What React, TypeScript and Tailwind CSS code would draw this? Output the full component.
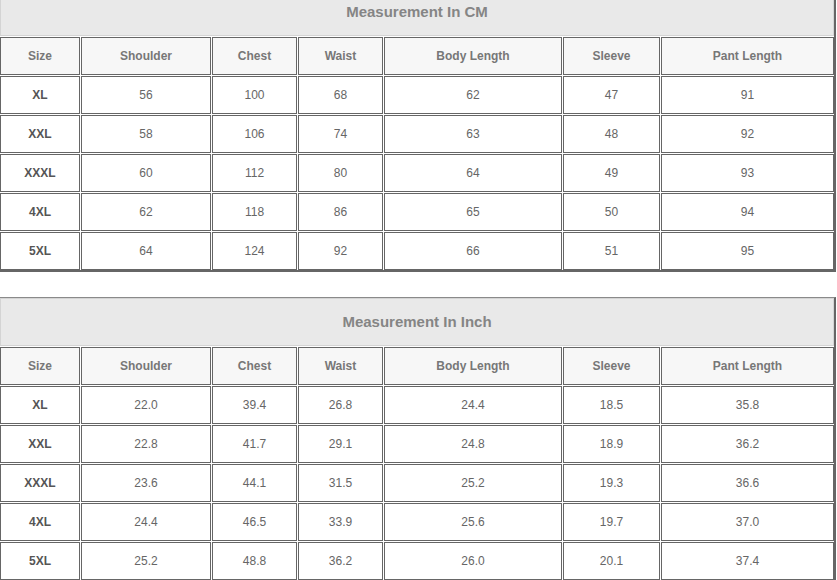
const COLUMNS = ['Size', 'Shoulder', 'Chest', 'Waist', 'Body Length', 'Sleeve', 'Pant Length'];

const CM_ROWS = [
  ['XL', '56', '100', '68', '62', '47', '91'],
  ['XXL', '58', '106', '74', '63', '48', '92'],
  ['XXXL', '60', '112', '80', '64', '49', '93'],
  ['4XL', '62', '118', '86', '65', '50', '94'],
  ['5XL', '64', '124', '92', '66', '51', '95'],
];

const INCH_ROWS = [
  ['XL', '22.0', '39.4', '26.8', '24.4', '18.5', '35.8'],
  ['XXL', '22.8', '41.7', '29.1', '24.8', '18.9', '36.2'],
  ['XXXL', '23.6', '44.1', '31.5', '25.2', '19.3', '36.6'],
  ['4XL', '24.4', '46.5', '33.9', '25.6', '19.7', '37.0'],
  ['5XL', '25.2', '48.8', '36.2', '26.0', '20.1', '37.4'],
];

function SizeTable({ title, rows }: { title: string; rows: string[][] }) {
  return (
    <div className="w-[838px] border-t border-l border-t-[#8a8a8a] border-l-[#bdbdbd] border-r-2 border-b-2 border-r-[#666] border-b-[#666] pl-px">
      <div className="grid grid-cols-[80px_130px_85px_85px_178px_97px_173px] gap-px">
        <div className="col-span-7 h-[48px] flex items-center justify-center bg-[#e9e9e9] border border-[#d4d4d4] text-[15px] font-bold text-[#858585]">
          {title}
        </div>
        {COLUMNS.map((c) => (
          <div
            key={c}
            className="h-[38px] flex items-center justify-center bg-[#f7f7f7] border border-[#666] text-[12px] font-bold text-[#777]"
          >
            {c}
          </div>
        ))}
        {rows.map((row) =>
          row.map((v, i) => (
            <div
              key={row[0] + '-' + i}
              className={
                i === 0
                  ? 'h-[38px] flex items-center justify-center bg-white border border-[#666] text-[12px] font-bold text-[#555]'
                  : 'h-[38px] flex items-center justify-center bg-white border border-[#666] text-[12px] text-[#666]'
              }
            >
              {v}
            </div>
          ))
        )}
      </div>
    </div>
  );
}

export default function App() {
  return (
    <div className="w-[837px] h-[580px] overflow-hidden bg-white font-['Liberation_Sans',Arial,sans-serif]">
      <div className="-mt-[13px] -ml-[2px] flex flex-col gap-[25px]">
        <SizeTable title="Measurement In CM" rows={CM_ROWS} />
        <SizeTable title="Measurement In Inch" rows={INCH_ROWS} />
      </div>
    </div>
  );
}
